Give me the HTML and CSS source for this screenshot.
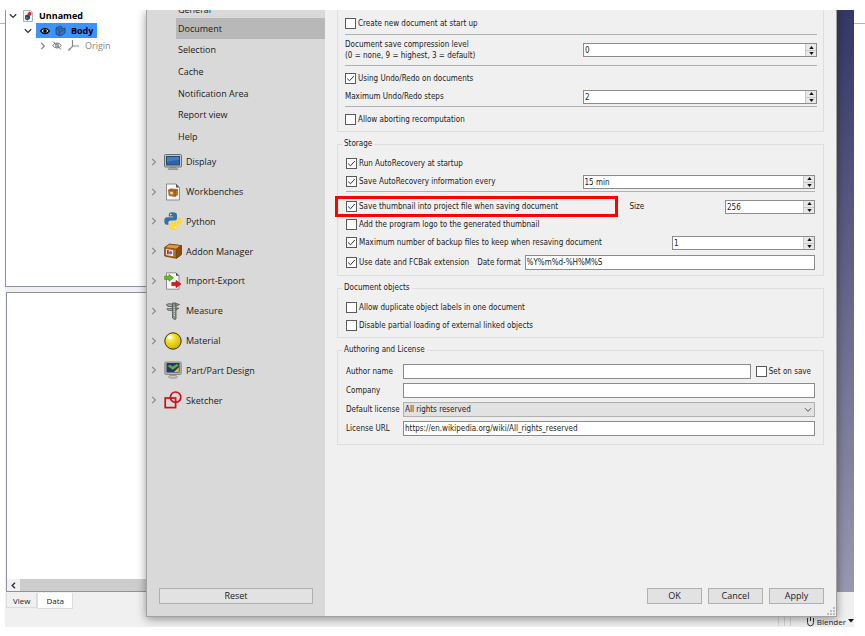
FILE: index.html
```html
<!DOCTYPE html>
<html lang="en">
<head>
    <meta charset="UTF-8">
    <meta name="viewport" content="width=device-width, initial-scale=1.0">
    <title>Preferences</title>
    <link rel="stylesheet" href="styles.css">
</head>
<body>
    <svg class="defs" aria-hidden="true">
        <symbol id="chev-right" viewBox="0 0 6 8"><path d="M1.2 0.8 L4.4 4 L1.2 7.2" fill="none" stroke="currentColor" stroke-width="1.2"/></symbol>
        <symbol id="chev-down" viewBox="0 0 8 6"><path d="M0.8 1.2 L4 4.4 L7.2 1.2" fill="none" stroke="currentColor" stroke-width="1.3"/></symbol>
        <symbol id="tri-up" viewBox="0 0 5 3"><path d="M0.3 3 L2.5 0 L4.7 3 Z" fill="#111"/></symbol>
        <symbol id="tri-down" viewBox="0 0 5 3"><path d="M0.3 0 L2.5 3 L4.7 0 Z" fill="#111"/></symbol>
    </svg>

    <div class="app">
        <div class="workspace">
            <div class="dock">
                <div class="tree-panel">
                    <ul class="tree">
                        <li class="tree-row level-0">
                            <svg class="arrow" width="8" height="6"><use href="#chev-down"/></svg>
                            <svg width="10" height="12" viewBox="0 0 10 12">
                                <path d="M0.5 0.5 H7.5 L9.5 2.5 V11.5 H0.5 Z" fill="#f4f4f4" stroke="#b0b0b0"/>
                                <path d="M2 5.5 L4.5 4.5 L7 5.5 V8.5 L4.5 10.5 L2 9 Z" fill="#24466f"/>
                                <path d="M4.5 3.5 L6.5 1.5 L8.7 3 L7.7 5.6 L5.2 5.6 Z" fill="#d3202a"/>
                                <path d="M3 6.4 L4.6 7 V9.3 L3 8.4 Z" fill="#4a7ab5"/>
                            </svg>
                            <span class="tree-name">Unnamed</span>
                        </li>
                        <li class="tree-row level-1">
                            <svg class="arrow" width="8" height="6"><use href="#chev-down"/></svg>
                            <span class="tree-active">
                                <svg width="10" height="8" viewBox="0 0 10 8">
                                    <path d="M0.6 4 Q5 -1.4 9.4 4 Q5 9.4 0.6 4 Z" fill="#fff" stroke="#0a0a0a" stroke-width="1.2"/>
                                    <circle cx="5" cy="4" r="1.9" fill="#0a0a0a"/>
                                </svg>
                                <svg width="11" height="12" viewBox="0 0 11 12">
                                    <path d="M1 3 L5 1 L7 2 V4 L10 3 V8 L5 11 L1 9 Z" fill="#3a74bd" stroke="#1c4479" stroke-width="0.8"/>
                                    <path d="M1 3 L4 4.4 V10.2 M4 4.4 L7 2.6 M4 7.5 L7 6 L10 4.6" fill="none" stroke="#1c4479" stroke-width="0.7"/>
                                </svg>
                                <span class="tree-name">Body</span>
                            </span>
                        </li>
                        <li class="tree-row level-2">
                            <svg class="arrow" width="6" height="8"><use href="#chev-right"/></svg>
                            <svg width="10" height="9" viewBox="0 0 10 9">
                                <path d="M0.6 4.5 Q5 -0.6 9.4 4.5 Q5 9.6 0.6 4.5 Z" fill="none" stroke="#777"/>
                                <circle cx="5" cy="4.5" r="1.5" fill="none" stroke="#777"/>
                                <path d="M1 0.5 L9 8.5" stroke="#777"/>
                            </svg>
                            <svg width="11" height="11" viewBox="0 0 11 11">
                                <path d="M4.5 0 V6.5 L0.8 10.2 M4.5 6 H11" fill="none" stroke="#888" stroke-width="1.2"/>
                                <path d="M0.3 10.7 L1 8 L3 10 Z" fill="#888"/>
                            </svg>
                            <span>Origin</span>
                        </li>
                    </ul>
                </div>
                <div class="data-panel">
                    <div class="scrollbar">
                        <button class="scroll-left" aria-label="Scroll left"><svg width="5" height="7" viewBox="0 0 5 7"><path d="M4 0.8 L1.2 3.5 L4 6.2" fill="none" stroke="#333" stroke-width="1.4"/></svg></button>
                        <span class="scroll-thumb"></span>
                    </div>
                </div>
            </div>
            <div class="viewport"></div>
        </div>

        <div class="bottom-bar">
            <div class="tabs">
                <button class="tab">View</button>
                <button class="tab tab-active">Data</button>
            </div>
            <div class="status">
                <span class="divider"></span>
                <span class="divider"></span>
                <span class="divider"></span>
                <button class="nav-style">
                    <svg width="9" height="11" viewBox="0 0 9 11">
                        <path d="M1.5 2 V6.5 Q1.5 9.8 4.5 9.8 Q7.5 9.8 7.5 6.5 V2 M4.5 1 V5" fill="none" stroke="#333"/>
                    </svg>
                    Blender
                    <svg class="caret" width="6" height="4" viewBox="0 0 6 4"><path d="M0 0 H6 L3 3.6 Z" fill="#111"/></svg>
                </button>
            </div>
        </div>

        <div class="dialog" role="dialog" aria-label="Preferences">
            <nav class="sidebar">
                <div class="sub-list">
                    <a href="#general">General</a>
                    <a href="#document" class="selected">Document</a>
                    <a href="#selection">Selection</a>
                    <a href="#cache">Cache</a>
                    <a href="#notification">Notification Area</a>
                    <a href="#report">Report view</a>
                    <a href="#help">Help</a>
                </div>
                <div class="group-list">
                    <a href="#display">
                        <svg class="arrow" width="6" height="8"><use href="#chev-right"/></svg>
                        <svg width="18" height="18" viewBox="0 0 18 18">
                            <rect x="0.5" y="1.5" width="17" height="12.5" rx="1" fill="#c4c6bd" stroke="#6d6f69"/>
                            <rect x="2.5" y="3.5" width="13" height="8.5" fill="#2f62a8" stroke="#24497c"/>
                            <path d="M3 4 H15 V7 Q9 7 3 9 Z" fill="#4a7cbc"/>
                            <path d="M6 14.5 H12 L14 16.5 H4 Z" fill="#a5a79f" stroke="#777971" stroke-width="0.6"/>
                        </svg>
                        Display
                    </a>
                    <a href="#workbenches">
                        <svg class="arrow" width="6" height="8"><use href="#chev-right"/></svg>
                        <svg width="18" height="18" viewBox="0 0 18 18">
                            <path d="M2.5 1 H12 L15.5 4.5 V17 H2.5 Z" fill="#f6f6f6" stroke="#8e8e8e"/>
                            <path d="M12 1 V4.5 H15.5 Z" fill="#555"/>
                            <path d="M4.5 7 L7 5.8 L13.5 6.5 V12 L11 13.5 L5 12.5 Z" fill="#c4701b" stroke="#8a5218" stroke-width="0.6"/>
                            <path d="M4.5 7 L11 8 L13.5 6.5 M11 8 V13.3" fill="none" stroke="#74400c" stroke-width="0.6"/>
                            <rect x="6.2" y="8.8" width="2.6" height="2.4" fill="#f0d9c0"/>
                        </svg>
                        Workbenches
                    </a>
                    <a href="#python">
                        <svg class="arrow" width="6" height="8"><use href="#chev-right"/></svg>
                        <svg width="18" height="18" viewBox="0 0 18 18">
                            <path d="M8.8 0.3 C5 0.3 4.8 1.6 4.8 3 V4.6 H9.2 V5.3 H2.8 C1.2 5.3 0.3 6.8 0.3 9 C0.3 11.4 1.3 12.8 2.7 12.8 H4.4 V10.6 C4.4 9.2 5.5 8.4 6.8 8.4 H11 C12.2 8.4 13 7.5 13 6.4 V3 C13 1.2 11.6 0.3 8.8 0.3 Z" fill="#3571a6"/>
                            <path d="M9.2 17.7 C13 17.7 13.2 16.4 13.2 15 V13.4 H8.8 V12.7 H15.2 C16.8 12.7 17.7 11.2 17.7 9 C17.7 6.6 16.7 5.2 15.3 5.2 H13.8 V7.2 C13.8 8.7 12.6 9.5 11.3 9.5 H7 C5.8 9.5 5 10.4 5 11.5 V15 C5 16.8 6.4 17.7 9.2 17.7 Z" fill="#ffd845"/>
                            <circle cx="6.8" cy="2.6" r="0.8" fill="#fff"/>
                            <circle cx="11.2" cy="15.4" r="0.8" fill="#fff"/>
                        </svg>
                        Python
                    </a>
                    <a href="#addons">
                        <svg class="arrow" width="6" height="8"><use href="#chev-right"/></svg>
                        <svg width="18" height="18" viewBox="0 0 18 18">
                            <path d="M0.7 5.5 L5.5 2.2 L17.3 3.6 V12.5 L12.5 16.3 L0.7 14 Z" fill="#b56a16" stroke="#5f3607" stroke-width="0.8"/>
                            <path d="M0.7 5.5 L5.5 2.2 L17.3 3.6 L12.5 7 Z" fill="#dc9a42" stroke="#5f3607" stroke-width="0.5"/>
                            <path d="M12.5 7 L17.3 3.6 V12.5 L12.5 16.3 Z" fill="#8c4e0c" stroke="#5f3607" stroke-width="0.5"/>
                            <path d="M2.2 7 L9.2 8.2 V14.2 L2.2 12.9 Z" fill="#eef2f8"/>
                            <path d="M3 8 H4.8 V12.6 L3 12.2 Z" fill="#d8262c"/>
                            <circle cx="6.6" cy="10.8" r="1.7" fill="#3d7fcb"/>
                        </svg>
                        Addon Manager
                    </a>
                    <a href="#import-export">
                        <svg class="arrow" width="6" height="8"><use href="#chev-right"/></svg>
                        <svg width="18" height="18" viewBox="0 0 18 18">
                            <path d="M2.5 0.8 H12 L15 3.8 V17.2 H2.5 Z" fill="#f8f8f8" stroke="#8e8e8e"/>
                            <path d="M12 0.8 V3.8 H15 Z" fill="#444"/>
                            <path d="M0.7 4.2 H5 V2.3 L9.5 5.8 L5 9.2 V7.4 H0.7 Z" fill="#62bd1e" stroke="#3c8208" stroke-width="0.6"/>
                            <path d="M7.8 10.4 H12 V8.4 L17 12 L12 15.6 V13.6 H7.8 Z" fill="#dc1b1b" stroke="#930b0b" stroke-width="0.6"/>
                        </svg>
                        Import-Export
                    </a>
                    <a href="#measure">
                        <svg class="arrow" width="6" height="8"><use href="#chev-right"/></svg>
                        <svg width="18" height="18" viewBox="0 0 18 18">
                            <path d="M8.5 1 H12 V17 L10.3 17.6 L8.5 16 Z" fill="#8c928d" stroke="#4e544f" stroke-width="0.8"/>
                            <path d="M2.5 2.5 Q5 0.8 8.5 2.3 V4.5 H5 Q3 4.8 2.5 2.5 Z M8.5 6 V8.5 H5.5 Q3.2 8.5 2.8 6.8 Q5.5 7 8.5 6 Z M12 1.5 L15.5 2.5 L12 4.2 Z M12 6 L15 6.2 L12 8 Z" fill="#a5aba6" stroke="#4e544f" stroke-width="0.8"/>
                            <path d="M10.3 5 V15" stroke="#dfe3df" stroke-width="0.9" stroke-dasharray="1 1"/>
                        </svg>
                        Measure
                    </a>
                    <a href="#material">
                        <svg class="arrow" width="6" height="8"><use href="#chev-right"/></svg>
                        <svg width="18" height="18" viewBox="0 0 18 18">
                            <defs>
                                <radialGradient id="ball" cx="0.35" cy="0.3" r="0.75">
                                    <stop offset="0" stop-color="#fff9b0"/>
                                    <stop offset="0.35" stop-color="#f4e02a"/>
                                    <stop offset="1" stop-color="#cfae00"/>
                                </radialGradient>
                            </defs>
                            <circle cx="9" cy="9" r="8.2" fill="url(#ball)" stroke="#3a3400" stroke-width="1"/>
                            <ellipse cx="6" cy="5.2" rx="2.2" ry="1.7" fill="#fffde6"/>
                        </svg>
                        Material
                    </a>
                    <a href="#part-design">
                        <svg class="arrow" width="6" height="8"><use href="#chev-right"/></svg>
                        <svg width="18" height="18" viewBox="0 0 18 18">
                            <rect x="0.8" y="1" width="16.4" height="12.5" rx="1" fill="#b4b6b0" stroke="#8a8c86"/>
                            <rect x="2.5" y="2" width="13" height="9.5" fill="#2b3467"/>
                            <path d="M3.5 5 L6.2 3.8 L8.5 5.4 L13 3 L14.6 4.6 L8.8 8.8 Z" fill="#49b83b"/>
                            <path d="M10 11 L14.8 6.2 V11 Z" fill="#d9bd3b"/>
                            <ellipse cx="9" cy="15.8" rx="4.5" ry="1.4" fill="#c9cac6" stroke="#77796f" stroke-width="0.7"/>
                        </svg>
                        Part/Part Design
                    </a>
                    <a href="#sketcher">
                        <svg class="arrow" width="6" height="8"><use href="#chev-right"/></svg>
                        <svg width="18" height="18" viewBox="0 0 18 18">
                            <rect x="1.2" y="7" width="10.4" height="9.6" fill="none" stroke="#cc1016" stroke-width="1.7"/>
                            <circle cx="11.6" cy="6.2" r="5.2" fill="none" stroke="#cc1016" stroke-width="1.7"/>
                        </svg>
                        Sketcher
                    </a>
                </div>
                <button class="btn btn-reset">Reset</button>
            </nav>

            <form class="content">
                <div class="group group-clipped">
                    <label class="row"><input type="checkbox"> Create new document at start up</label>
                    <hr>
                    <div class="row row-split row-double">
                        <label for="compression">Document save compression level<br>(0 = none, 9 = highest, 3 = default)</label>
                        <span class="spin">
                            <input type="text" id="compression" value="0">
                            <span class="spin-buttons">
                                <button type="button" aria-label="Increase"><svg width="5" height="3"><use href="#tri-up"/></svg></button>
                                <button type="button" aria-label="Decrease"><svg width="5" height="3"><use href="#tri-down"/></svg></button>
                            </span>
                        </span>
                    </div>
                    <hr>
                    <label class="row row-tall"><input type="checkbox" checked> Using Undo/Redo on documents</label>
                    <div class="row row-split row-short">
                        <label for="undo-steps">Maximum Undo/Redo steps</label>
                        <span class="spin">
                            <input type="text" id="undo-steps" value="2">
                            <span class="spin-buttons">
                                <button type="button" aria-label="Increase"><svg width="5" height="3"><use href="#tri-up"/></svg></button>
                                <button type="button" aria-label="Decrease"><svg width="5" height="3"><use href="#tri-down"/></svg></button>
                            </span>
                        </span>
                    </div>
                    <hr>
                    <label class="row row-tall"><input type="checkbox"> Allow aborting recomputation</label>
                </div>

                <fieldset class="group">
                    <legend>Storage</legend>
                    <div class="rows">
                        <label class="row"><input type="checkbox" checked> Run AutoRecovery at startup</label>
                        <div class="row row-split">
                            <label class="check"><input type="checkbox" checked> Save AutoRecovery information every</label>
                            <span class="spin">
                                <input type="text" value="15 min" aria-label="AutoRecovery interval">
                                <span class="spin-buttons">
                                    <button type="button" aria-label="Increase"><svg width="5" height="3"><use href="#tri-up"/></svg></button>
                                    <button type="button" aria-label="Decrease"><svg width="5" height="3"><use href="#tri-down"/></svg></button>
                                </span>
                            </span>
                        </div>
                        <hr class="hr-wide">
                        <div class="row row-split">
                            <label class="check highlight"><input type="checkbox" checked> Save thumbnail into project file when saving document</label>
                            <div class="size-field">
                                <label for="thumb-size">Size</label>
                                <span class="spin spin-small">
                                    <input type="text" id="thumb-size" value="256">
                                    <span class="spin-buttons">
                                        <button type="button" aria-label="Increase"><svg width="5" height="3"><use href="#tri-up"/></svg></button>
                                        <button type="button" aria-label="Decrease"><svg width="5" height="3"><use href="#tri-down"/></svg></button>
                                    </span>
                                </span>
                            </div>
                        </div>
                        <label class="row"><input type="checkbox"> Add the program logo to the generated thumbnail</label>
                        <div class="row row-spread">
                            <label class="check"><input type="checkbox" checked> Maximum number of backup files to keep when resaving document</label>
                            <span class="spin spin-medium">
                                <input type="text" value="1" aria-label="Maximum number of backup files">
                                <span class="spin-buttons">
                                    <button type="button" aria-label="Increase"><svg width="5" height="3"><use href="#tri-up"/></svg></button>
                                    <button type="button" aria-label="Decrease"><svg width="5" height="3"><use href="#tri-down"/></svg></button>
                                </span>
                            </span>
                        </div>
                        <div class="row row-tall">
                            <label class="check date-check"><input type="checkbox" checked> Use date and FCBak extension</label>
                            <label for="date-format">Date format</label>
                            <input type="text" class="field" id="date-format" value="%Y%m%d-%H%M%S">
                        </div>
                    </div>
                </fieldset>

                <fieldset class="group">
                    <legend>Document objects</legend>
                    <div class="rows">
                        <label class="row"><input type="checkbox"> Allow duplicate object labels in one document</label>
                        <label class="row"><input type="checkbox"> Disable partial loading of external linked objects</label>
                    </div>
                </fieldset>

                <fieldset class="group">
                    <legend>Authoring and License</legend>
                    <div class="license-grid">
                        <label for="author">Author name</label>
                        <div class="author">
                            <input type="text" class="field" id="author">
                            <label class="check"><input type="checkbox"> Set on save</label>
                        </div>
                        <label for="company">Company</label>
                        <input type="text" class="field" id="company">
                        <label for="license">Default license</label>
                        <select class="field" id="license">
                            <option>All rights reserved</option>
                        </select>
                        <label for="license-url">License URL</label>
                        <input type="text" class="field" id="license-url" value="https://en.wikipedia.org/wiki/All_rights_reserved">
                    </div>
                </fieldset>

                <div class="footer">
                    <button type="button" class="btn">OK</button>
                    <button type="button" class="btn">Cancel</button>
                    <button type="button" class="btn">Apply</button>
                </div>
            </form>
            <svg class="grip" width="8" height="8" viewBox="0 0 8 8">
                <path d="M6 0h2v2h-2z M3 3h2v2h-2z M6 3h2v2h-2z M0 6h2v2h-2z M3 6h2v2h-2z M6 6h2v2h-2z" fill="#bdbdbd"/>
            </svg>
        </div>
    </div>
</body>
</html>
```
FILE: styles.css
```css
* {
    box-sizing: border-box;
}

body {
    margin: 0;
    padding: 10px 11px 9px 5px;
    position: relative;
    background: #fff;
    color: #1a1a1a;
    font-family: "DejaVu Sans Condensed", "DejaVu Sans", sans-serif;
    font-size: 8px;
    line-height: 11px;
}

/* window edge that shows on both sides of the app */
body::before {
    content: "";
    position: absolute;
    top: 23px;
    left: 0;
    right: 0;
    height: 1px;
    background: #b4b4b4;
}

button, input, select {
    font: inherit;
    color: inherit;
}

a {
    color: inherit;
    text-decoration: none;
}

.defs {
    position: absolute;
    width: 0;
    height: 0;
}

.app {
    position: relative;
    display: flex;
    flex-direction: column;
    height: calc(100vh - 19px);
    min-height: 560px;
    overflow: hidden;
    background: #f0f0f0;
}

/* main window behind the dialog */
.workspace {
    flex: 1;
    display: grid;
    grid-template-columns: 1fr 1fr;
}

.dock {
    display: flex;
    flex-direction: column;
    gap: 5px;
}

.tree-panel {
    flex: 12;
    background: #fff;
    border: 1px solid #8e929c;
    border-top: none;
    overflow: hidden;
}

.data-panel {
    flex: 13;
    display: flex;
    flex-direction: column;
    justify-content: flex-end;
    margin-left: 1px;
    background: #fff;
    border: 1px solid #8e929c;
}

.tree {
    list-style: none;
    margin: -2px 0 0;
    padding: 0;
    font-family: "Open Sans", sans-serif;
    font-size: 9px;
}

.tree-row {
    display: flex;
    align-items: center;
    height: 15px;
    gap: 6px;
}

.tree-row .arrow {
    color: #333;
}

.tree-name {
    font-weight: bold;
    color: #000;
}

.level-0 {
    padding-left: 3px;
}

.level-1 {
    padding-left: 18px;
    gap: 4px;
}

.level-2 {
    padding-left: 34px;
    color: #858585;
}

.level-2 .arrow {
    color: #858585;
}

.tree-active {
    display: flex;
    align-items: center;
    gap: 5px;
    height: 15px;
    padding: 0 4px;
    background: #3c93fa;
}

.scrollbar {
    display: flex;
    height: 12px;
    background: #cdcdcd;
}

.scroll-left {
    width: 13px;
    padding: 0;
    border: none;
    background: #f0f0f0;
    display: flex;
    align-items: center;
    justify-content: center;
}

.viewport {
    background: linear-gradient(#363668, #9898b0);
}

.bottom-bar {
    display: flex;
    justify-content: space-between;
    height: 35px;
    font-family: "Open Sans", sans-serif;
}

.tabs {
    display: flex;
    align-items: flex-start;
    padding: 1px 0 0 1px;
}

.tab {
    height: 15px;
    padding: 0 6px;
    border: 1px solid #dcdcdc;
    border-top: none;
    background: #f0f0f0;
}

.tab-active {
    height: 16px;
    padding: 0 8px;
    background: #fff;
}

.status {
    align-self: flex-end;
    display: flex;
    align-items: center;
    gap: 5px;
    height: 12px;
}

.divider {
    width: 1px;
    height: 10px;
    background: #d2d2d2;
}

.nav-style {
    display: flex;
    align-items: center;
    gap: 2px;
    padding: 0 0 0 10px;
    border: none;
    background: none;
}

/* preferences dialog */
.dialog {
    position: absolute;
    top: 0;
    left: 141px;
    right: 17px;
    bottom: 10px;
    display: flex;
    background: #f0f0f0;
    border: 1px solid #a2a2a2;
    border-top: none;
    box-shadow: 0 2px 9px rgba(0, 0, 0, 0.4);
}

.sidebar {
    width: 178px;
    display: flex;
    flex-direction: column;
    overflow: hidden;
    background: #d9d9d9;
    font-family: "Open Sans", sans-serif;
    font-size: 9px;
}

/* scrolled down a little, so the first entry is cut off */
.sub-list {
    display: grid;
    grid-auto-rows: 1fr;
    flex: none;
    height: 151px;
    margin: -14px 0 0 29px;
}

.sub-list a {
    display: flex;
    align-items: center;
    padding-left: 2px;
}

.sub-list a:first-child {
    align-items: flex-end;
    padding-bottom: 3px;
}

.sub-list .selected {
    background: #b8b8b8;
}

.group-list {
    display: grid;
    grid-auto-rows: 1fr;
    flex: none;
    height: 268px;
}

.group-list a {
    display: flex;
    align-items: center;
    gap: 4px;
    padding-left: 4px;
}

.group-list .arrow {
    margin-right: 3px;
    color: #8a8a8a;
}

.btn {
    width: 55px;
    height: 16px;
    padding: 0;
    border: 1px solid #b0b0b0;
    background: #e2e2e2;
    font-family: "Open Sans", sans-serif;
    font-size: 9px;
    line-height: 12px;
}

.btn-reset {
    width: auto;
    margin: auto 12px 12px;
}

.content {
    flex: 1;
    min-width: 0;
    display: flex;
    flex-direction: column;
    gap: 6px;
    padding: 0 12px 12px;
}

.group {
    min-width: 0;
    margin: 0;
    padding: 0 8px 3px;
    border: 1px solid #dedede;
}

.group-clipped {
    display: flex;
    flex-direction: column;
    gap: 1px;
    padding: 5px 6px 2px 7px;
    border-top: none;
}

legend {
    height: 12px;
    margin-left: -4px;
    padding: 0 2px;
    line-height: 12px;
}

.rows {
    display: flex;
    flex-direction: column;
    gap: 1px;
    padding-top: 5px;
}

.row {
    display: flex;
    align-items: center;
    min-height: 17px;
}

.row-short {
    min-height: 15px;
}

.row-tall {
    min-height: 20px;
}

.row-double {
    min-height: 26px;
}

.row-split {
    display: grid;
    grid-template-columns: 1fr 1fr;
    column-gap: 4px;
}

.row-spread {
    justify-content: space-between;
}

.check {
    display: flex;
    align-items: center;
    white-space: nowrap;
}

.date-check {
    margin-right: 8px;
}

#date-format {
    margin-left: 4px;
}

hr {
    width: 100%;
    height: 1px;
    margin: 1px 0;
    border: none;
    background: #b2b2b2;
}

.hr-wide {
    margin: 0 0 5px;
}

input[type="checkbox"] {
    appearance: none;
    flex: none;
    width: 11px;
    height: 11px;
    margin: 0 2px 0 0;
    border: 1px solid #5a5a5a;
    background: #fff;
}

input[type="checkbox"]:checked {
    background: #fff url("data:image/svg+xml,%3Csvg xmlns='http://www.w3.org/2000/svg' viewBox='0 0 9 9'%3E%3Cpath d='M1.2 4.6 L3.5 6.8 L7.8 2' fill='none' stroke='%23333'/%3E%3C/svg%3E") center / 9px no-repeat;
}

.field {
    flex: 1;
    width: 100%;
    min-width: 0;
    height: 15px;
    padding: 0 1px;
    border: 1px solid #8c8c8c;
    border-radius: 0;
    background: #fff;
}

select.field {
    appearance: none;
    border-color: #b0b0b0;
    background: #e2e2e2 url("data:image/svg+xml,%3Csvg xmlns='http://www.w3.org/2000/svg' viewBox='0 0 8 6'%3E%3Cpath d='M1 1.2 L4 4.4 L7 1.2' fill='none' stroke='%23555'/%3E%3C/svg%3E") right 2px center / 8px 6px no-repeat;
}

.spin {
    display: flex;
    height: 14px;
    border: 1px solid #8c8c8c;
    background: #fff;
}

.spin input {
    flex: 1;
    width: 100%;
    min-width: 0;
    padding: 1px 1px 0;
    border: none;
    background: none;
}

.spin-small {
    width: 90px;
}

.spin-medium {
    width: 143px;
}

.spin-buttons {
    display: grid;
    flex: none;
    width: 11px;
    grid-template-rows: 1fr 1fr;
    border-left: 1px solid #c8c8c8;
}

.spin-buttons button {
    display: flex;
    align-items: center;
    justify-content: center;
    min-height: 0;
    padding: 0;
    border: none;
    background: #e8e8e8;
}

.spin-buttons button + button {
    border-top: 1px solid #c8c8c8;
}

.size-field {
    display: flex;
    align-items: center;
    justify-content: space-between;
    padding-left: 47px;
}

.highlight {
    position: relative;
}

.highlight::after {
    content: "";
    position: absolute;
    inset: -5px -39px -5px -11px;
    border: 3px solid #fe0000;
}

.license-grid {
    display: grid;
    grid-template-columns: 57px 1fr;
    align-items: center;
    row-gap: 4px;
    padding: 8px 0 5px;
    white-space: nowrap;
}

.author {
    display: flex;
    align-items: center;
    gap: 5px;
    padding-right: 4px;
}

.footer {
    display: flex;
    justify-content: flex-end;
    gap: 6px;
    margin-top: auto;
}

.grip {
    position: absolute;
    right: 1px;
    bottom: 1px;
}
```
